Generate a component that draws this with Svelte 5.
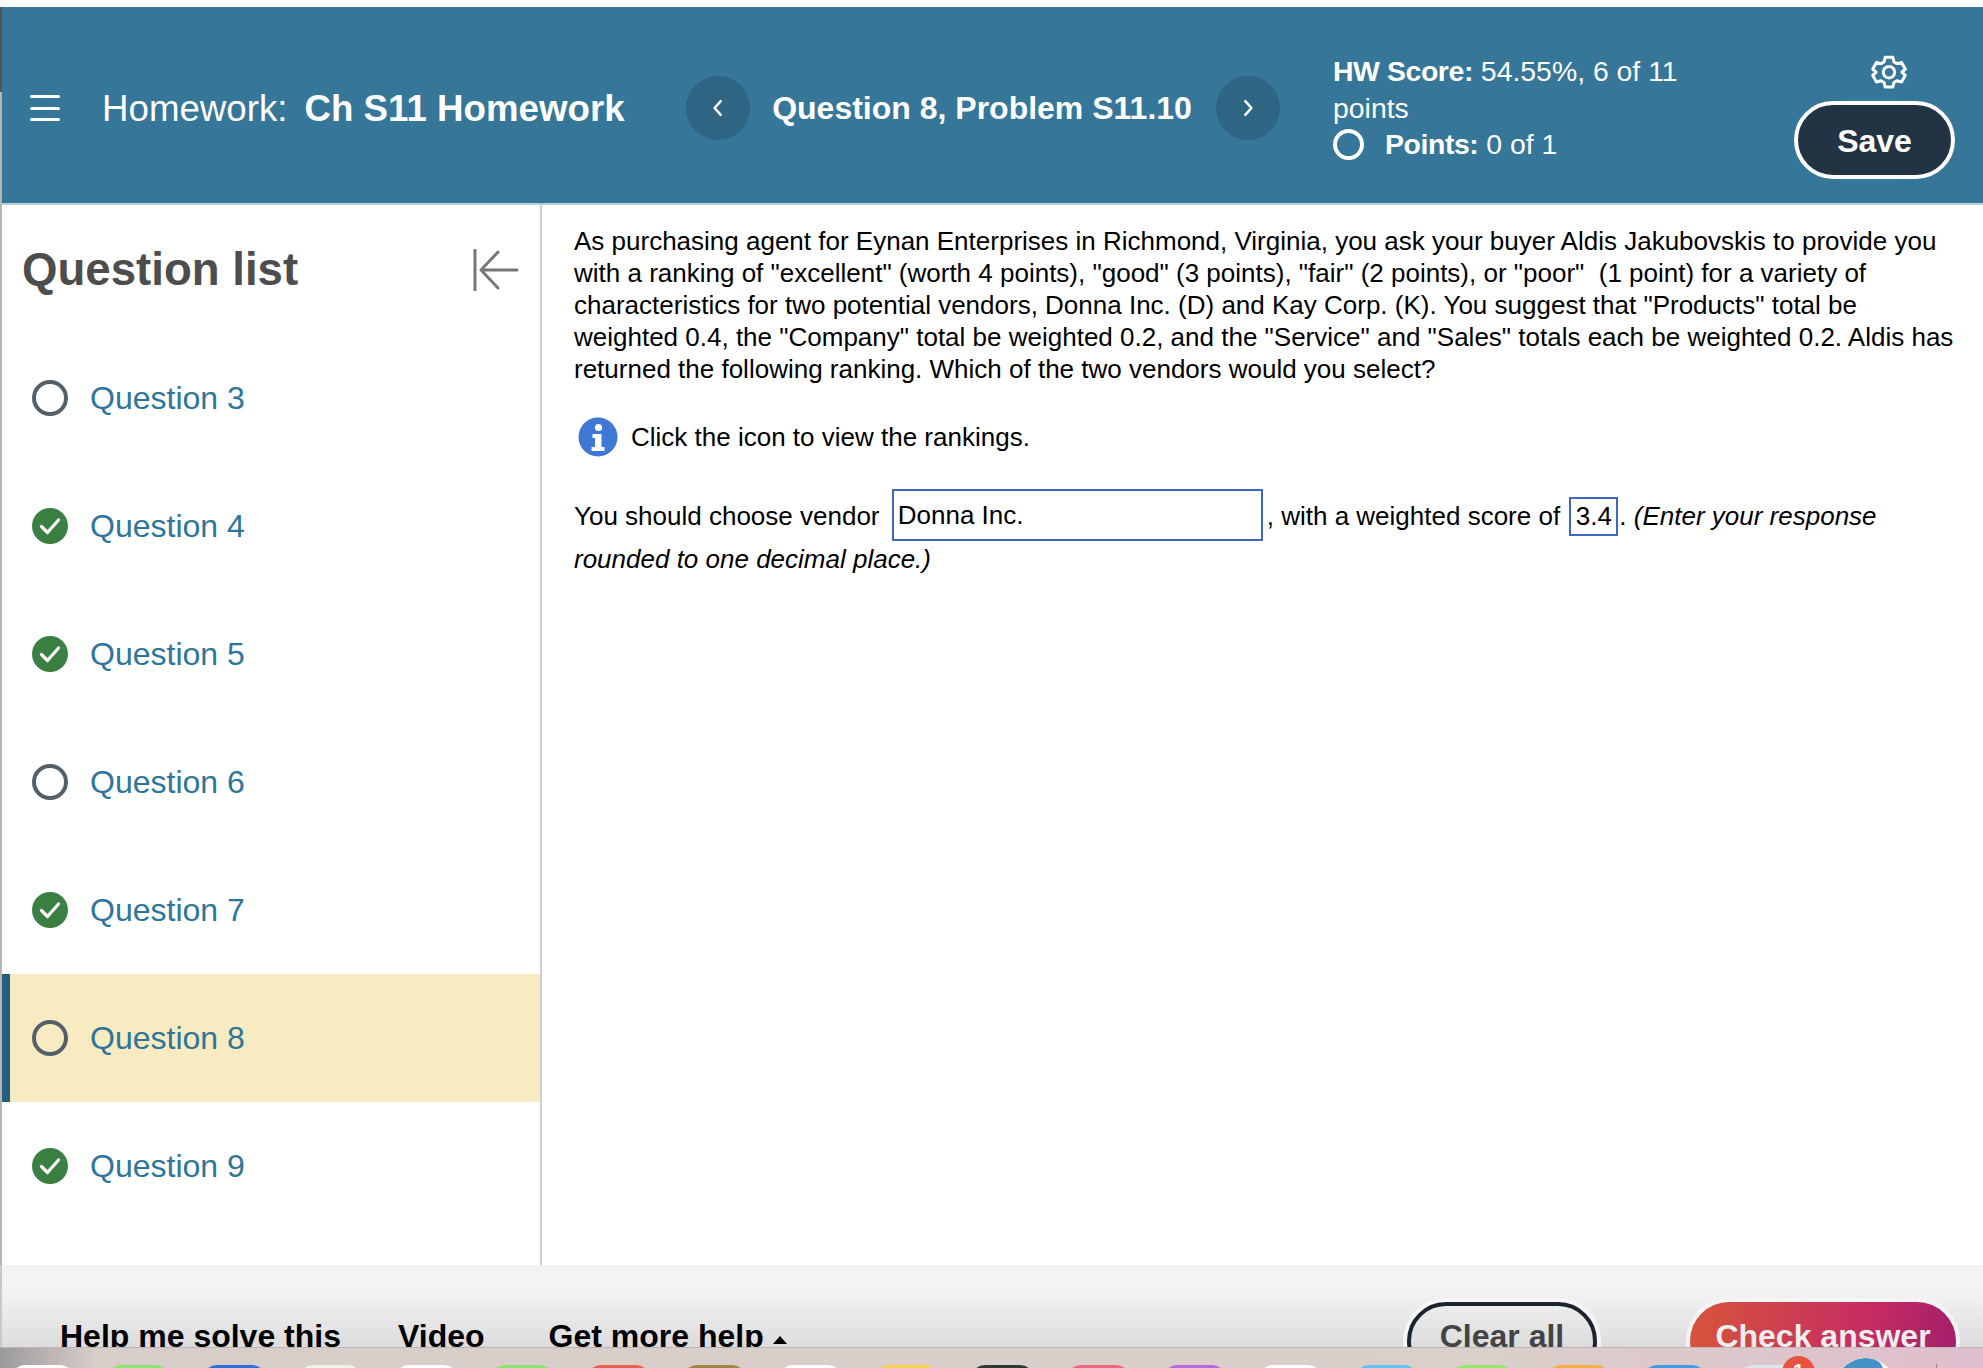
<script>
  const questions = [
    { n: 3, done: false },
    { n: 4, done: true },
    { n: 5, done: true },
    { n: 6, done: false },
    { n: 7, done: true },
    { n: 8, done: false, current: true },
    { n: 9, done: true }
  ];
  const dock = ['#ffffff', '#86e66f', '#2f6fdc', '#eef3ea', '#ffffff', '#86e66f', '#e8604f', '#a08448', '#ffffff', '#f5d24e', '#2b3a32', '#e96a7a', '#b56ae0', '#ffffff', '#5fc3f5', '#8fe86a', '#f5b045', '#3d9be8', '#dde6ee'];
</script>

<div class="page">
  <div class="topgap"></div>
  <div class="window">
    <div class="edge"></div>
    <div class="col">
      <header class="header">
        <button class="menu" aria-label="Menu">
          <span></span><span></span><span></span>
        </button>
        <h1 class="hw"><span class="hw-label">Homework:</span><strong>Ch S11 Homework</strong></h1>
        <div class="nav">
          <button class="circle" aria-label="Previous">
            <svg viewBox="0 0 16 16" width="22" height="22"><path d="M10 3 5.5 8 10 13" fill="none" stroke="#fff" stroke-width="1.8" stroke-linecap="round" stroke-linejoin="round"/></svg>
          </button>
          <div class="qtitle">Question 8, Problem S11.10</div>
          <button class="circle" aria-label="Next">
            <svg viewBox="0 0 16 16" width="22" height="22"><path d="M6 3 10.5 8 6 13" fill="none" stroke="#fff" stroke-width="1.8" stroke-linecap="round" stroke-linejoin="round"/></svg>
          </button>
        </div>
        <div class="score">
          <div><b>HW Score:</b> 54.55%, 6 of 11</div>
          <div>points</div>
          <div class="points"><span class="ring"></span><span><b>Points:</b> 0 of 1</span></div>
        </div>
        <div class="actions">
          <svg class="gear" viewBox="0 0 24 24" width="38" height="38" fill="none" stroke="#fff" stroke-width="1.9" stroke-linejoin="round">
            <path d="M9.6 2.6h4.8l.7 2.9 1.9 1.1 2.9-.8 2.4 4.2-2.2 2 2.2 2-2.4 4.2-2.9-.8-1.9 1.1-.7 2.9H9.6l-.7-2.9-1.9-1.1-2.9.8-2.4-4.2 2.2-2-2.2-2 2.4-4.2 2.9.8 1.9-1.1z" transform="translate(0 -.5)"/>
            <circle cx="12" cy="11.5" r="3.6"/>
          </svg>
          <button class="save">Save</button>
        </div>
      </header>
      <div class="main">
        <aside class="side">
          <div class="side-head">
            <h2>Question list</h2>
            <svg viewBox="0 0 46 42" width="46" height="42" fill="none" stroke="#777" stroke-width="3" stroke-linecap="round" stroke-linejoin="round">
              <path d="M2 1v40M44 21H10M25 3 8 21l17 18"/>
            </svg>
          </div>
          <ul class="list">
            {#each questions as q}
              <li class:current={q.current}>
                {#if q.done}
                  <svg viewBox="0 0 36 36" width="36" height="36">
                    <circle cx="18" cy="18" r="18" fill="#3b8043"/>
                    <path d="M9.5 18.5 15.5 24.5 26.5 12" fill="none" stroke="#fff" stroke-width="3.2" stroke-linecap="round" stroke-linejoin="round"/>
                  </svg>
                {:else}
                  <svg viewBox="0 0 36 36" width="36" height="36">
                    <circle cx="18" cy="18" r="16" fill="none" stroke="#555f68" stroke-width="4"/>
                  </svg>
                {/if}
                <span>Question {q.n}</span>
              </li>
            {/each}
          </ul>
        </aside>
        <section class="content">
          <p class="problem">As purchasing agent for Eynan Enterprises in Richmond, Virginia, you ask your buyer Aldis Jakubovskis to provide you<br>with a ranking of "excellent" (worth 4 points), "good" (3 points), "fair" (2 points), or "poor"&nbsp; (1 point) for a variety of<br>characteristics for two potential vendors, Donna Inc. (D) and Kay Corp. (K). You suggest that "Products" total be<br>weighted 0.4, the "Company" total be weighted 0.2, and the "Service" and "Sales" totals each be weighted 0.2. Aldis has<br>returned the following ranking. Which of the two vendors would you select?</p>
          <div class="info">
            <svg viewBox="0 0 40 40" width="40" height="40">
              <circle cx="20" cy="20" r="19.5" fill="#3f78d4"/>
              <circle cx="20.5" cy="10.5" r="3.6" fill="#fff"/>
              <path d="M14.5 17h9v13h3v4h-13v-4h3.5v-9h-2.5z" fill="#fff"/>
            </svg>
            <span>Click the icon to view the rankings.</span>
          </div>
          <p class="answer">You should choose vendor <span class="box vendor">Donna Inc.</span>, with a weighted score of <span class="box val">3.4</span>. <i>(Enter your response<br>rounded to one decimal place.)</i></p>
        </section>
      </div>
      <footer class="footer">
        <a href="#help">Help me solve this</a>
        <a href="#video" class="video">Video</a>
        <a href="#more">Get more help<span class="tri"></span></a>
        <div class="spacer"></div>
        <button class="clear">Clear all</button>
        <button class="check">Check answer</button>
      </footer>
    </div>
  </div>
  <div class="dock">
    {#each dock as d}
      <span class="app" style="background:{d}"></span>
    {/each}
    <span class="badge">1</span>
    <span class="globe"><i></i></span>
    <span class="sep"></span>
  </div>
</div>

<style>
  :global(body) { margin: 0; background: #fff; }
  :global(*) { box-sizing: border-box; }
  .page {
    width: 1983px; height: 1368px; display: flex; flex-direction: column; overflow: hidden;
    font-family: "Liberation Sans", Arial, sans-serif; color: #000; background: #fff;
  }
  .topgap { height: 7px; flex: none; }
  .window { flex: none; height: 1340px; display: flex; }
  .edge {
    width: 2px; flex: none;
    background: linear-gradient(#555 0 85px, #b5b5b5 85px 1258px, #c4c8d0 1258px);
  }
  .col { flex: 1; min-width: 0; display: flex; flex-direction: column; }

  .header {
    height: 198px; flex: none; background: #367698; border-bottom: 2px solid #b9cedb;
    display: flex; align-items: center; color: #fff; position: relative; padding-top: 6px;
  }
  button { font-family: inherit; cursor: pointer; }
  .menu {
    width: 30px; height: 26px; margin-left: 28px; padding: 0; border: 0; background: none;
    display: flex; flex-direction: column; justify-content: space-between;
  }
  .menu span { display: block; height: 3px; border-radius: 2px; background: #fff; }
  .hw { margin: 2px 0 0 42px; width: 584px; font-size: 36.7px; font-weight: 400; white-space: nowrap; }
  .hw-label { margin-right: 17px; }
  .hw strong { font-weight: 700; }
  .nav { display: flex; align-items: center; }
  .circle {
    width: 64px; height: 64px; border-radius: 50%; border: 0; background: #2e6583;
    display: flex; align-items: center; justify-content: center; padding: 0;
  }
  .qtitle { width: 466px; padding-right: 2px; margin-top: 1px; text-align: center; font-size: 32px; font-weight: 700; white-space: nowrap; }
  .score { margin-left: 53px; width: 460px; font-size: 28.4px; line-height: 36.5px; white-space: nowrap; }
  .score b { letter-spacing: -0.4px; }
  .points { display: flex; align-items: center; gap: 21px; }
  .ring { width: 31px; height: 31px; border: 4px solid #fff; border-radius: 50%; }
  .actions {
    display: flex; flex-direction: column; align-items: center; gap: 9px;
    position: absolute; right: 28px; top: 47px;
  }
  .gear { transform: translateX(14px); }
  .save {
    width: 161px; height: 78px; border-radius: 39px; border: 4px solid #fff; background: #223344;
    color: #fff; font-size: 32px; font-weight: 700; padding: 2px 0 0;
  }

  .main { flex: none; height: 1060px; display: flex; }
  .side { width: 540px; flex: none; border-right: 2px solid #c8cfda; }
  .side-head {
    height: 129px; display: flex; align-items: center; justify-content: space-between;
    padding: 0 21px 0 20px;
  }
  .side-head h2 { margin: 0; font-size: 45.6px; font-weight: 700; color: #4d4d4d; }
  .list { list-style: none; margin: 0; padding: 0; }
  .list li {
    height: 128px; display: flex; align-items: center; gap: 22px; padding-left: 30px;
    font-size: 32px; color: #2f7599;
  }
  .list li.current { background: #f8ebc2; box-shadow: inset 8px 0 0 #255f7c; }

  .content { flex: 1; min-width: 0; padding: 20px 0 0 32px; font-size: 26px; white-space: nowrap; }
  .problem { margin: 0; line-height: 32px; }
  .info { display: flex; align-items: center; gap: 13px; margin: 32px 0 0 4px; height: 40px; }
  .answer { margin: 38px 0 0; line-height: 42px; }
  .box { display: inline-block; border: 2px solid #3d67c0; vertical-align: middle; }
  .vendor { width: 371px; height: 52px; line-height: 48px; padding-left: 4px; margin: -9px 4px -3px 5px; }
  .val { width: 49px; height: 39px; line-height: 35px; text-align: center; margin: -4px 1px 0 2px; }

  .footer {
    flex: 1; min-height: 0; overflow: hidden; display: flex; align-items: flex-start;
    padding: 37px 27px 0 58px;
    background: linear-gradient(#f3f3f3 0 25px, #dcdcdc 100%);
  }
  .footer a {
    color: #000; text-decoration: none; font-size: 32px; font-weight: 700; line-height: 36px;
    margin-top: 16px; margin-right: 57px; white-space: nowrap;
  }
  .footer a.video { margin-right: 64px; }
  .tri {
    display: inline-block; width: 0; height: 0; vertical-align: 3px; margin-left: 9px;
    border-left: 7.5px solid transparent; border-right: 7.5px solid transparent; border-bottom: 8px solid #000;
  }
  .spacer { flex: 1; }
  .clear, .check {
    height: 78px; border-radius: 39px; font-size: 32px; font-weight: 700; padding: 0 0 10px;
    box-shadow: 0 0 0 4px #f5f5f5; flex: none;
  }
  .clear { width: 190px; border: 4px solid #1b2430; background: transparent; color: #444; margin-right: 93px; }
  .check {
    width: 266px; border: 0; color: #eee;
    background: linear-gradient(100deg, #d6553a 0%, #c62c62 65%, #a01f6c 100%);
  }

  .dock {
    flex: 1; min-height: 0; position: relative; border-top: 1px solid #bdb6b2; padding-left: 11px;
    display: flex; gap: 33px; overflow: hidden; align-items: flex-start;
    background: linear-gradient(90deg, #9a9a9a 0, #d9cdc9 95px, #dacfca 1500px, #dfbecd 100%);
  }
  .app { width: 63px; height: 40px; border-radius: 14px 14px 0 0; margin-top: 17px; flex: none; }
  .badge {
    position: absolute; left: 1782px; top: 8px; width: 33px; height: 33px; border-radius: 50%;
    background: #e8523f; color: #fff; font-size: 20px; font-weight: 700; text-align: center; line-height: 30px;
  }
  .globe {
    position: absolute; left: 1834px; top: 10px; width: 63px; height: 63px; border-radius: 50%;
    background: #fff; overflow: hidden;
  }
  .globe i {
    display: block; position: absolute; left: 0; top: 0; width: 42px; height: 30px; background: #4392c9;
    border-radius: 60% 60% 20% 0; transform: skewX(-20deg) translateX(6px);
  }
  .sep { position: absolute; left: 1936px; top: 16px; width: 1px; height: 10px; background: #8d8688; }
</style>
